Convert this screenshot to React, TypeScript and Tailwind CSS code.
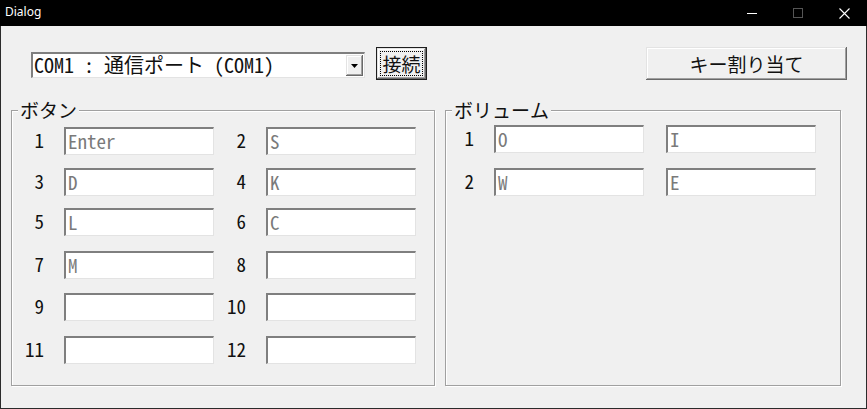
import React from 'react';

const buttonRows = [
  { gap: '', cells: [['1', 'Enter'], ['2', 'S']] },
  { gap: 'mt-[13px]', cells: [['3', 'D'], ['4', 'K']] },
  { gap: 'mt-[12px]', cells: [['5', 'L'], ['6', 'C']] },
  { gap: 'mt-[15px]', cells: [['7', 'M'], ['8', '']] },
  { gap: 'mt-[14px]', cells: [['9', ''], ['10', '']] },
  { gap: 'mt-[15px]', cells: [['11', ''], ['12', '']] },
];

const volumeRows = [
  { gap: '', label: '1', up: 'O', down: 'I' },
  { gap: 'mt-[15px]', label: '2', up: 'W', down: 'E' },
];

const raised =
  'shadow-[inset_-1px_-1px_0_#696969,inset_1px_1px_0_#e3e3e3,inset_-2px_-2px_0_#a0a0a0,inset_2px_2px_0_#ffffff]';

const Field = ({ value }: { value: string }) => (
  <div className="w-[150px] h-[28px] bg-white border-t-2 border-l-2 border-b border-r border-t-[#7f7f7f] border-l-[#7f7f7f] border-b-[#e3e3e3] border-r-[#e3e3e3] pl-[2px] pb-[2px] flex items-center text-[19px] leading-none text-[#7a7a7a]">
    {value}
  </div>
);

const GroupBox = ({ title, className, children }: { title: string; className: string; children: React.ReactNode }) => (
  <div
    className={`relative h-[276px] border border-[#a0a0a0] shadow-[1px_1px_0_#ffffff,inset_1px_1px_0_#ffffff] ${className}`}
  >
    <span className="absolute -top-[11px] left-[6px] px-[2px] bg-[#f0f0f0] text-[19px] leading-[20px] text-[#111]">
      {title}
    </span>
    {children}
  </div>
);

export default function App() {
  return (
    <div className="w-[867px] h-[409px] flex flex-col border-x border-b border-[#2b2b2b] bg-[#f0f0f0] font-['Noto_Sans_Mono_CJK_JP','Noto_Sans_CJK_JP',monospace] font-light text-[#111]">
      {/* title bar */}
      <div className="h-[26px] -mx-[1px] bg-black flex items-center text-white">
        <span className="pl-[5px] pb-[2px] font-['Noto_Sans',sans-serif] font-normal text-[12px]">Dialog</span>
        <div className="ml-auto flex h-full">
          <div className="w-[46px] h-full flex items-center justify-center">
            <svg width="10" height="10" viewBox="0 0 10 10">
              <line x1="0" y1="5.5" x2="10" y2="5.5" stroke="#ffffff" strokeWidth="1" />
            </svg>
          </div>
          <div className="w-[46px] h-full flex items-center justify-center">
            <svg width="10" height="10" viewBox="0 0 10 10">
              <rect x="0.5" y="0.5" width="9" height="9" fill="none" stroke="#555555" strokeWidth="1" />
            </svg>
          </div>
          <div className="w-[46px] h-full flex items-center justify-center">
            <svg width="11" height="11" viewBox="0 0 11 11">
              <path d="M0.5 0.5 L10.5 10.5 M10.5 0.5 L0.5 10.5" stroke="#ffffff" strokeWidth="1.1" />
            </svg>
          </div>
        </div>
      </div>

      {/* top controls */}
      <div className="flex items-start pt-[21px]">
        <div className="ml-[30px] mt-[5px] w-[334px] h-[26px] bg-white border-t-2 border-l-2 border-b border-r border-t-[#7f7f7f] border-l-[#7f7f7f] border-b-[#e3e3e3] border-r-[#e3e3e3] flex items-stretch">
          <span className="flex-1 pl-[1px] pb-[1px] flex items-center text-[20px] leading-none whitespace-pre">
            COM1 : 通信ポート (COM1)
          </span>
          <div className={`w-[17px] m-[1px] bg-[#f0f0f0] flex items-center justify-center ${raised}`}>
            <svg width="7" height="4" viewBox="0 0 7 4">
              <path d="M0 0 H7 L3.5 4 Z" fill="#000000" />
            </svg>
          </div>
        </div>
        <button className={`ml-[11px] w-[51px] h-[33px] border border-[#1e1e1e] bg-[#f0f0f0] p-[3px] ${raised}`}>
          <div className="w-full h-full border border-dotted border-black flex items-center justify-center text-[19px] leading-none pb-[1px]">
            接続
          </div>
        </button>
        <button
          className={`ml-auto mr-[19px] w-[201px] h-[33px] bg-[#f0f0f0] flex items-center justify-center text-[19px] leading-none pb-[1px] ${raised}`}
        >
          キー割り当て
        </button>
      </div>

      {/* group boxes */}
      <div className="flex mt-[30px]">
        <GroupBox title="ボタン" className="ml-[10px] w-[424px]">
          <div className="flex flex-col pt-[16px]">
            {buttonRows.map((row, i) => (
              <div key={i} className={`flex items-center h-[28px] ${row.gap}`}>
                <span className="w-[32px] text-right text-[19px] leading-none pb-[4px]">{row.cells[0][0]}</span>
                <div className="ml-[20px]">
                  <Field value={row.cells[0][1]} />
                </div>
                <span className="w-[32px] text-right text-[19px] leading-none pb-[4px]">{row.cells[1][0]}</span>
                <div className="ml-[20px]">
                  <Field value={row.cells[1][1]} />
                </div>
              </div>
            ))}
          </div>
        </GroupBox>
        <GroupBox title="ボリューム" className="ml-[10px] w-[396px]">
          <div className="flex flex-col pt-[14px]">
            {volumeRows.map((row) => (
              <div key={row.label} className={`flex items-center h-[28px] ${row.gap}`}>
                <span className="w-[28px] text-right text-[19px] leading-none pb-[4px]">{row.label}</span>
                <div className="ml-[20px]">
                  <Field value={row.up} />
                </div>
                <div className="ml-[22px]">
                  <Field value={row.down} />
                </div>
              </div>
            ))}
          </div>
        </GroupBox>
      </div>
    </div>
  );
}
